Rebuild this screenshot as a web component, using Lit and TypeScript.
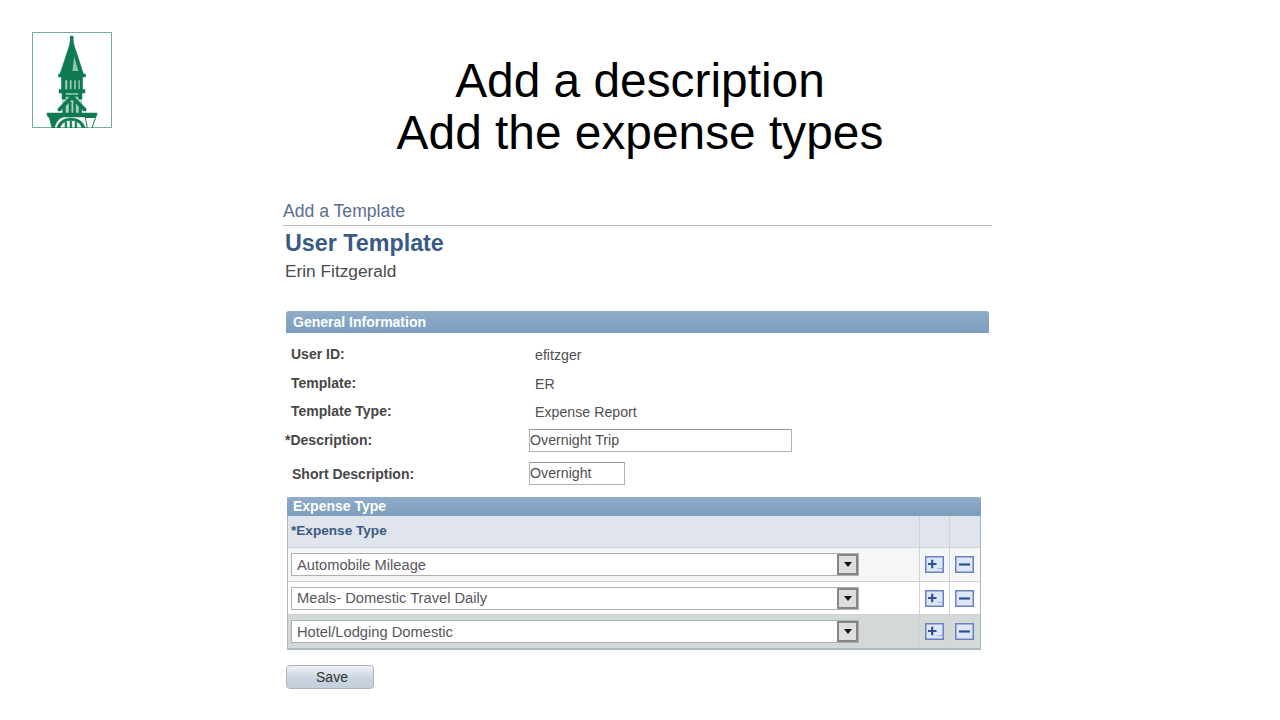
import { LitElement, html, css, svg } from "lit";
import { customElement } from "lit/decorators.js";

const logo = svg`<svg class="logo" viewBox="0 0 80 96" width="80" height="96">
  <rect x="0.5" y="0.5" width="79" height="95" fill="#fff" stroke="#6fb096" stroke-width="1"/>
  <g class="art">
    <path d="M29.500 48h21v10h-21zM30 61h20v20H30z" fill="#a9d3c0"/>
    <g fill="#0f7a50" stroke="#0f7a50" stroke-width="0.500">
      <circle cx="39.700" cy="5.500" r="1.700"/>
      <path d="M38.400 6h2.600l.8 7h-4.200z"/>
      <path d="M37.500 13h4.500l9.500 29H28z"/>
      <path d="M26.500 42h27v3h-27z"/>
      <path d="M29.500 45h21v3h-21z"/>
      <path d="M29.500 48h3.500v10h-3.500zM35.500 48h2.200v10h-2.200zM39.800 48h2.200v10h-2.200zM44 48h2.200v10H44zM48 48h2.500v10H48z"/>
      <path d="M27 57.500h26v3.500H27z"/>
      <path d="M30 61h3.500v6H30zM46.500 61h3.500v6h-3.500zM33 63h14v1.500H33z"/>
      <path d="M40 62.500l14 14v2.500h-2.500L40 67.500 28.500 79H26v-2.500z"/>
      <path d="M31 72h2.500v9H31zM37 70h2.200v11H37zM41.500 70h2.200v11h-2.200zM47 72h2.500v9H47z"/>
      <path d="M15 81h50v1.500l-1 2.500H16l-1-2.500z"/>
      <path d="M17 85h14c-5 2-7.500 6-8.500 11H20z"/>
      <path d="M25 96c1-6 7-10 14-10s13 4 14 10h-3c-1-4-5-7.500-11-7.500S29 92 28 96z"/>
      <path d="M33 90h1.800v6H33zM38 89h1.800v7H38zM43 90h1.800v6H43z"/>
    </g>
    <path d="M42 24l4.500 15h-6z" fill="#8cc4ac"/>
    <path d="M53 85.500h10.500L60 96h-5c0-4-1-7.500-2-10.500z" fill="#fff" stroke="#0f7a50" stroke-width="1"/>
  </g>
</svg>`;

const plus = svg`<svg class="ic" viewBox="0 0 19 17" width="19" height="17">
  <rect x="0.750" y="0.750" width="17.500" height="15.500" fill="#dce7f7" stroke="#6a80c0" stroke-width="1.500"/>
  <path d="M3 8h8.500M7.200 3.800v8.500" stroke="#34508f" stroke-width="2.200" fill="none"/>
  <path d="M12.500 12.500h1M14.500 12.500h1M16 12.500h1" stroke="#8094c6" stroke-width="1" fill="none"/>
</svg>`;
const minus = svg`<svg class="ic" viewBox="0 0 19 17" width="19" height="17">
  <rect x="0.750" y="0.750" width="17.500" height="15.500" fill="#dce7f7" stroke="#6a80c0" stroke-width="1.500"/>
  <path d="M4 8.500h11" stroke="#34508f" stroke-width="2.200" fill="none"/>
</svg>`;

@customElement("app-root")
export class AppRoot extends LitElement {
  static styles = css`
    :host { display: block; width: 1280px; height: 720px; background: #fff; overflow: hidden;
      font-family: "Liberation Sans", Arial, sans-serif; color: #444; }
    .head { display: grid; grid-template-columns: 1fr auto 1fr; padding: 32px 32px 0; height: 168px; box-sizing: border-box; }
    .logo { display: block; }
    .art { filter: blur(0.4px); }
    h1 { margin: 23px 0 0; font-weight: 400; font-size: 47.850px; line-height: 52px; color: #000; text-align: center; }
    .form { width: 709px; margin-left: 283px; }
    .crumb { font-size: 17.600px; line-height: 24px; margin-top: 31px; color: #5a6d90; padding-bottom: 2px; border-bottom: 1px solid #b9bcc2; }
    h2 { margin: 2px 0 0 2px; font-size: 23.300px; line-height: 30px; font-weight: 700; color: #3a5a85; }
    .name { margin: 0 0 0 2px; font-size: 17.300px; line-height: 26px; color: #4a4a4a; }
    .bar { background: linear-gradient(#8fadc9, #7c9dbf); color: #fff; font-weight: 700; font-size: 14px;
      border-radius: 3px 3px 0 0; box-sizing: border-box; }
    .gen { margin: 27px 0 0 3px; width: 703px; height: 22px; line-height: 22px; padding-left: 7px; }
    .fields { margin: 7px 0 0 2px; display: grid; grid-template-columns: 243px 1fr; font-size: 14.200px; }
    .lab { font-weight: 700; color: #474747; display: flex; align-items: center; font-size: 14px; }
    .val { display: flex; align-items: center; padding: 2px 0 0 7px; box-sizing: border-box; color: #505050; }
    .r { height: 28.500px; }
    .ind { padding-left: 6px; }
    .ind2 { padding-left: 7px; }
    .in { box-sizing: border-box; height: 23px; border: 1px solid #b0b0b0; border-top-color: #959595; background: #fff;
      font-size: 14.200px; line-height: 21px; color: #505050; margin-left: 1px; }
    .w1 { width: 263px; }
    .w2 { width: 96px; }
    .g1 { height: 29px; align-items: center; display: flex; }
    .g2 { height: 38px; align-items: center; display: flex; }
    .grid { margin: 4.500px 0 0 4px; width: 694px; box-sizing: border-box; border: 1px solid #a9b9c9; border-top: 0; border-bottom-width: 2px; }
    .grid .bar { height: 19px; line-height: 18px; padding-left: 6px; margin: 0 -1px; }
    .row { display: grid; grid-template-columns: 632px 30px 30px; border-bottom: 1px solid #ccd2d6; box-sizing: border-box; }
    .row > div { display: flex; align-items: center; border-right: 1px solid #ccd2d6; box-sizing: border-box; }
    .row > div:last-child { border-right: 0; padding-right: 2px; }
    .row > .act { justify-content: center; }
    .hd { background: #dfe5eb; height: 32px; font-weight: 700; font-size: 13.600px; color: #3a5a85; }
    .hd > div:first-child { padding-left: 3px; padding-bottom: 2px; }
    .a { background: #f5f6f6; height: 34px; }
    .b { background: #fff; height: 33px; }
    .c { background: #d3d9d6; height: 33px; border-bottom: 0; }
    .sel { display: flex; align-items: center; justify-content: space-between; box-sizing: border-box; margin-left: 3px;
      width: 568px; height: 23px; background: #fff; border: 1px solid #b0b0b0; font-size: 14.700px; color: #5a5560; padding: 0 0 0 5px; }
    .dd { width: 21px; height: 21px; box-sizing: border-box; border: 2px solid #858585; background: #dedede; display: flex; align-items: center; justify-content: center; }
    .dd i { display: block; width: 0; height: 0; border: 4.500px solid transparent; border-top: 5px solid #111; border-bottom: 0; }
    .ic { display: block; }
    .save { margin: 15px 0 0 3px; width: 88px; height: 24px; box-sizing: border-box; border: 1px solid #a9b4c0; border-radius: 4px;
      background: linear-gradient(#eef1f4, #cbd5e0 55%, #c3cfdc); color: #333; font-size: 14px; text-align: center; line-height: 22px; padding-left: 4px; }
  `;

  private row(cls: string, label: string) {
    return html`<div class="row ${cls}">
      <div><div class="sel"><span>${label}</span><span class="dd"><i></i></span></div></div>
      <div class="act">${plus}</div>
      <div class="act">${minus}</div>
    </div>`;
  }

  render() {
    return html`
      <div class="head">
        <div>${logo}</div>
        <h1>Add a description<br />Add the expense types</h1>
        <div></div>
      </div>
      <div class="form">
        <div class="crumb">Add a Template</div>
        <h2>User Template</h2>
        <div class="name">Erin Fitzgerald</div>
        <div class="bar gen">General Information</div>
        <div class="fields">
          <div class="lab r ind">User ID:</div><div class="val r">efitzger</div>
          <div class="lab r ind">Template:</div><div class="val r">ER</div>
          <div class="lab r ind">Template Type:</div><div class="val r">Expense Report</div>
          <div class="lab g1">*Description:</div><div class="g1"><div class="in w1">Overnight Trip</div></div>
          <div class="lab g2 ind2">Short Description:</div><div class="g2"><div class="in w2">Overnight</div></div>
        </div>
        <div class="grid">
          <div class="bar">Expense Type</div>
          <div class="row hd"><div>*Expense Type</div><div></div><div></div></div>
          ${this.row("a", "Automobile Mileage")}
          ${this.row("b", "Meals- Domestic Travel Daily")}
          ${this.row("c", "Hotel/Lodging Domestic")}
        </div>
        <div class="save">Save</div>
      </div>
    `;
  }
}
